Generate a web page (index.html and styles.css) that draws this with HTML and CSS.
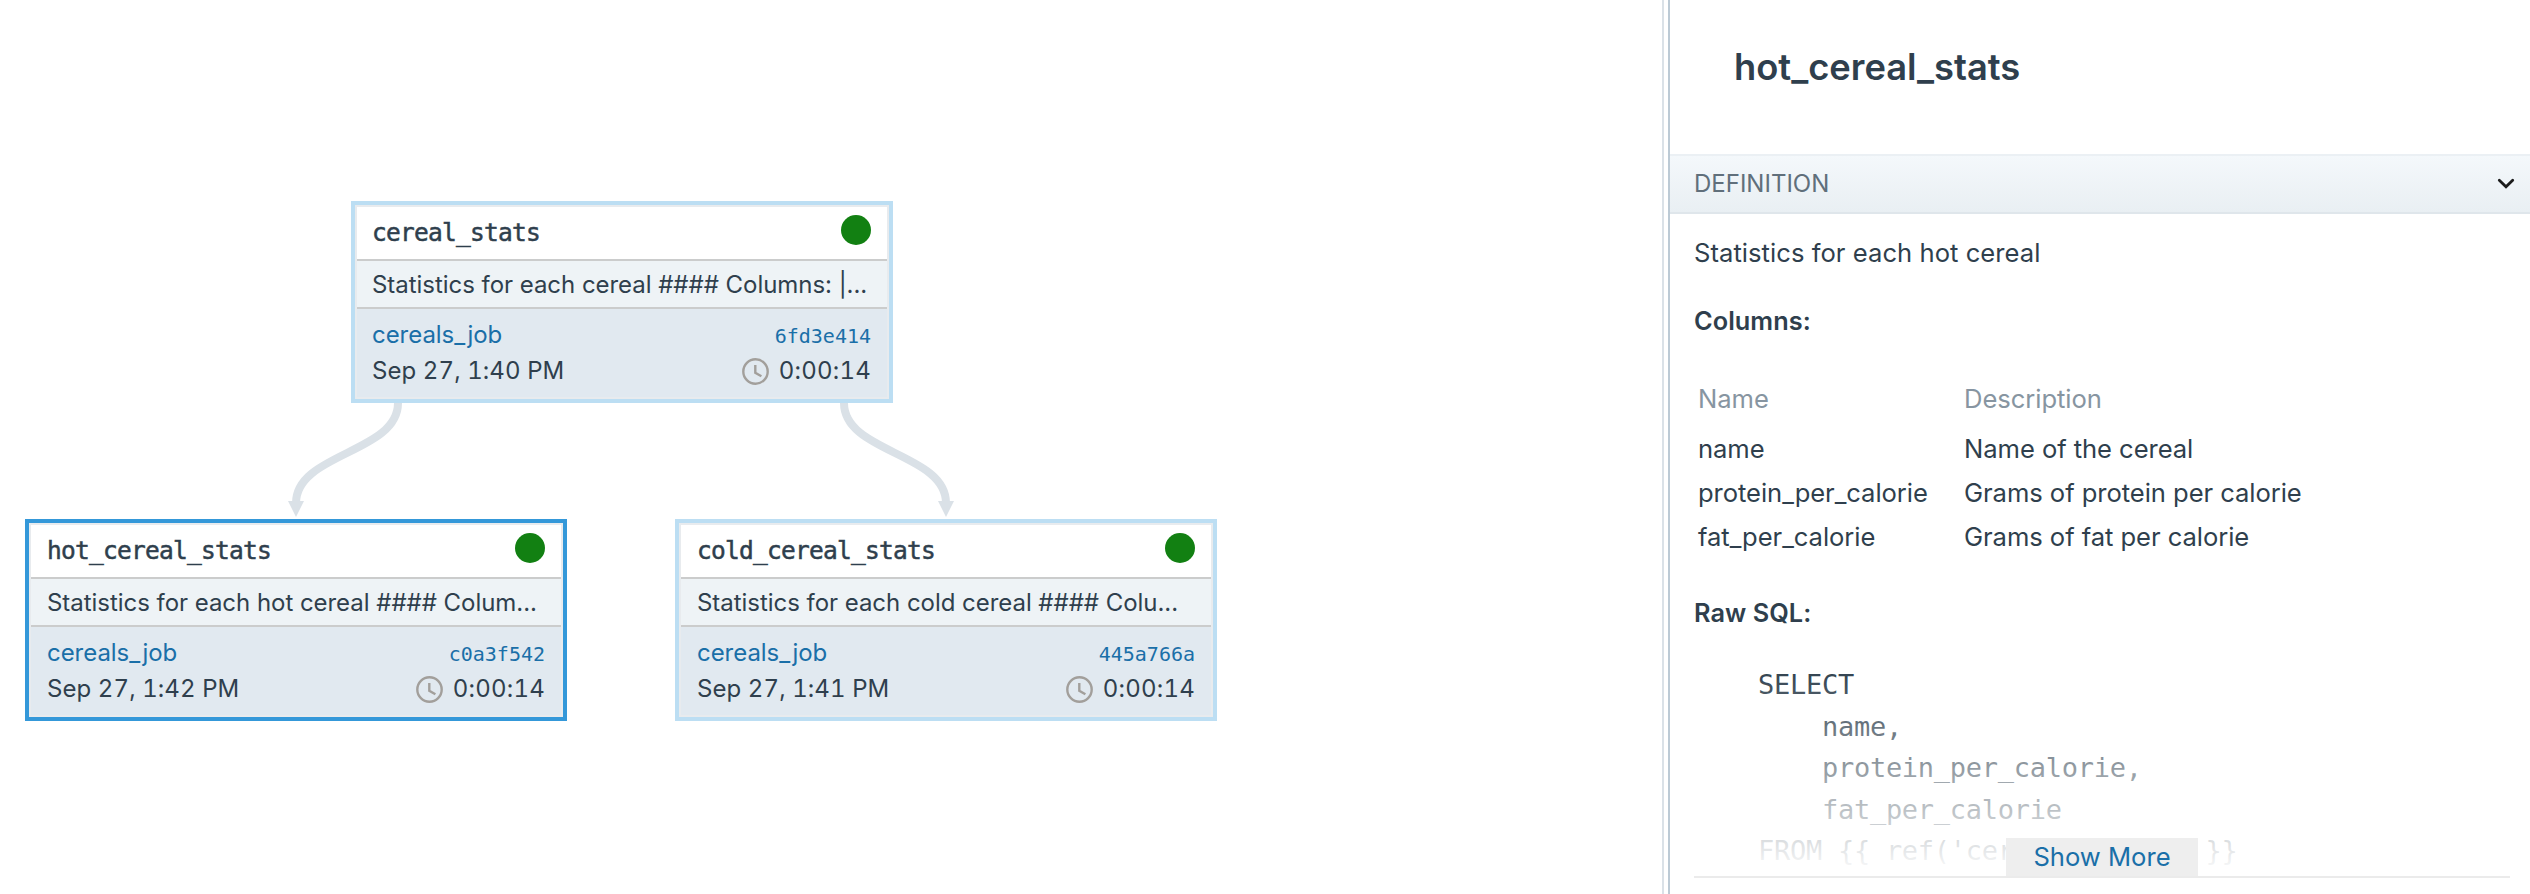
FILE: index.html
```html
<!DOCTYPE html>
<html lang="en">
<head>
<meta charset="utf-8">
<title>hot_cereal_stats</title>
<link rel="stylesheet" href="styles.css">
</head>
<body>
<div class="app">
  <main class="canvas">
    <svg class="edges" width="1662" height="894" viewBox="0 0 1662 894">
      <g class="edge-line">
        <path d="M398 403C398 453 296 453 296 503"/>
        <path d="M844 403C844 453 946 453 946 503"/>
      </g>
      <g class="edge-head">
        <path d="M288 501H304L296 517Z"/>
        <path d="M938 501H954L946 517Z"/>
      </g>
    </svg>
    <article class="node node-root">
      <header class="node-head"><span class="node-name">cereal_stats</span><i class="status"></i></header>
      <p class="node-desc"><span>Statistics for each cereal #### Columns: |...</span></p>
      <div class="node-run">
        <div class="run-row"><a class="job">cereals_job</a><a class="run-id">6fd3e414</a></div>
        <div class="run-row"><span class="date">Sep 27, 1:40 PM</span><span class="time"><svg class="clock" viewBox="0 0 27 27"><circle cx="13.5" cy="13.5" r="12.2"/><path d="M13.3 7V14.8L19.4 18.3"/></svg><span>0:00:14</span></span></div>
      </div>
    </article>
    <article class="node node-hot">
      <header class="node-head"><span class="node-name">hot_cereal_stats</span><i class="status"></i></header>
      <p class="node-desc"><span>Statistics for each hot cereal #### Colum...</span></p>
      <div class="node-run">
        <div class="run-row"><a class="job">cereals_job</a><a class="run-id">c0a3f542</a></div>
        <div class="run-row"><span class="date">Sep 27, 1:42 PM</span><span class="time"><svg class="clock" viewBox="0 0 27 27"><circle cx="13.5" cy="13.5" r="12.2"/><path d="M13.3 7V14.8L19.4 18.3"/></svg><span>0:00:14</span></span></div>
      </div>
    </article>
    <article class="node node-cold">
      <header class="node-head"><span class="node-name">cold_cereal_stats</span><i class="status"></i></header>
      <p class="node-desc"><span>Statistics for each cold cereal #### Colu...</span></p>
      <div class="node-run">
        <div class="run-row"><a class="job">cereals_job</a><a class="run-id">445a766a</a></div>
        <div class="run-row"><span class="date">Sep 27, 1:41 PM</span><span class="time"><svg class="clock" viewBox="0 0 27 27"><circle cx="13.5" cy="13.5" r="12.2"/><path d="M13.3 7V14.8L19.4 18.3"/></svg><span>0:00:14</span></span></div>
      </div>
    </article>
  </main>
  <div class="divider"></div>
  <aside class="panel">
    <h1 class="panel-title">hot_cereal_stats</h1>
    <div class="section-bar"><span>DEFINITION</span><svg class="chevron" width="18" height="12" viewBox="0 0 18 12"><path d="M2.3 2.3L9 8.8L15.7 2.3"/></svg></div>
    <div class="section-body">
      <p class="summary"><span>Statistics for each hot cereal</span></p>
      <h2 class="sub"><span>Columns:</span></h2>
      <div class="table">
        <span class="th">Name</span><span class="th">Description</span>
        <span>name</span><span>Name of the cereal</span>
        <span>protein_per_calorie</span><span>Grams of protein per calorie</span>
        <span>fat_per_calorie</span><span>Grams of fat per calorie</span>
      </div>
      <h2 class="sub sub-sql"><span>Raw SQL:</span></h2>
      <div class="sql">
<pre class="code">SELECT
    name,
    protein_per_calorie,
    fat_per_calorie
FROM {{ ref('cereal_stats') }}</pre>
        <div class="fade"><a class="more">Show More</a></div>
      </div>
    </div>
  </aside>
</div>
</body>
</html>
```
FILE: styles.css
```css
* { box-sizing: border-box; }
body {
  margin: 0;
  background: #fff;
  color: #2f3f4d;
  font: 375 24px "Inter", sans-serif;
}
h1, h2, p, pre { margin: 0; }
.app { display: flex; width: 2530px; height: 894px; overflow: hidden; }

.canvas { position: relative; flex: 0 0 1662px; }
.edges { position: absolute; left: 0; top: 0; }
.edge-line { fill: none; stroke: #dae1e7; stroke-width: 8; }
.edge-head { fill: #dae1e7; }

.node {
  position: absolute;
  width: 542px;
  height: 202px;
  border: 4px solid #bcdef3;
  outline: 2px solid #e8ebee;
  outline-offset: -6px;
  padding: 2px;
  letter-spacing: -0.04px;
}
.node-root { left: 351px; top: 201px; }
.node-hot { left: 25px; top: 519px; border-color: #3498d9; }
.node-cold { left: 675px; top: 519px; }
.node-head {
  display: flex;
  justify-content: space-between;
  height: 54px;
  padding: 8px 16px 0 15px;
  background: #fff;
  border-bottom: 2px solid #cbcccc;
}
.node-name {
  font: 24.5px/35px "DejaVu Sans Mono", monospace;
  letter-spacing: -0.75px;
  -webkit-text-stroke: 0.5px #2f3f4d;
}
.status { width: 30px; height: 30px; border-radius: 50%; background: #128012; }
.node-desc {
  height: 48px;
  padding: 0 15px;
  line-height: 47px;
  white-space: nowrap;
  background: #eef3f6;
  border-bottom: 2px solid #cbcccc;
}
.node-run { height: 88px; padding: 8px 16px 0 15px; background: #e1e9f0; }
.node-hot .node-head, .node-cold .node-head { padding-left: 16px; }
.node-hot .node-desc, .node-cold .node-desc { padding-left: 16px; }
.node-hot .node-run, .node-cold .node-run { padding-left: 16px; padding-right: 16px; }
.run-row { display: flex; justify-content: space-between; height: 36px; line-height: 36px; }
.job, .run-id { color: #1a6fa8; }
.run-id { font: 20px/38px "DejaVu Sans Mono", monospace; letter-spacing: 0; }
.date, .time { font-variant-numeric: tabular-nums; letter-spacing: 0.08px; }
.time { display: flex; align-items: center; gap: 10px; letter-spacing: 0.22px; }
.clock { width: 27px; height: 27px; fill: none; stroke: #a29f9b; stroke-width: 2.4; }

.divider { flex: 0 0 8px; border-left: 2px solid #dae1e7; border-right: 2px solid #bccad5; }

.panel { flex: 1; min-width: 0; }
.panel-title { height: 154px; padding-left: 64px; font-size: 36.3px; font-weight: 600; line-height: 134px; }
.section-bar {
  display: flex;
  align-items: center;
  justify-content: space-between;
  height: 60px;
  padding: 0 15px 0 24px;
  color: #606f7b;
  background: linear-gradient(#f4f8fb, #e9eff3);
  border-top: 2px solid #ebf0f4;
  border-bottom: 2px solid #dfe6eb;
}
.section-bar span { line-height: 28px; letter-spacing: 0; }
.chevron { fill: none; stroke: #1b1b1b; stroke-width: 2.8; stroke-linecap: round; }
.section-body { padding: 19px 20px 0 24px; font-size: 25.6px; letter-spacing: 0.04px; }
.summary { height: 40px; line-height: 40px; }
.sub { height: 40px; margin-top: 28px; font-size: 25.3px; line-height: 40px; font-weight: 600; letter-spacing: 0.05px; }
.table { display: grid; grid-template-columns: 266px 1fr; grid-template-rows: 50px 44px 44px 44px; margin-top: 36px; padding-left: 4px; line-height: 44px; letter-spacing: -0.06px; }
.th { color: #8795a1; }
.sub-sql { margin-top: 34px; }
.sql { position: relative; height: 220px; margin-top: 25px; border-bottom: 2px solid #ebebeb; overflow: hidden; }
.code { padding: 6px 0 0 64px; font: 27px/41.5px "DejaVu Sans Mono", monospace; letter-spacing: -0.27px; }
.fade {
  position: absolute;
  inset: 0;
  display: flex;
  justify-content: center;
  align-items: flex-end;
  background: linear-gradient(rgba(255,255,255,0) 10px, #fff 100%);
}
.more { width: 192px; height: 38px; line-height: 38px; letter-spacing: 0; text-align: center; color: #1a6fa8; background: #eee; }
```
